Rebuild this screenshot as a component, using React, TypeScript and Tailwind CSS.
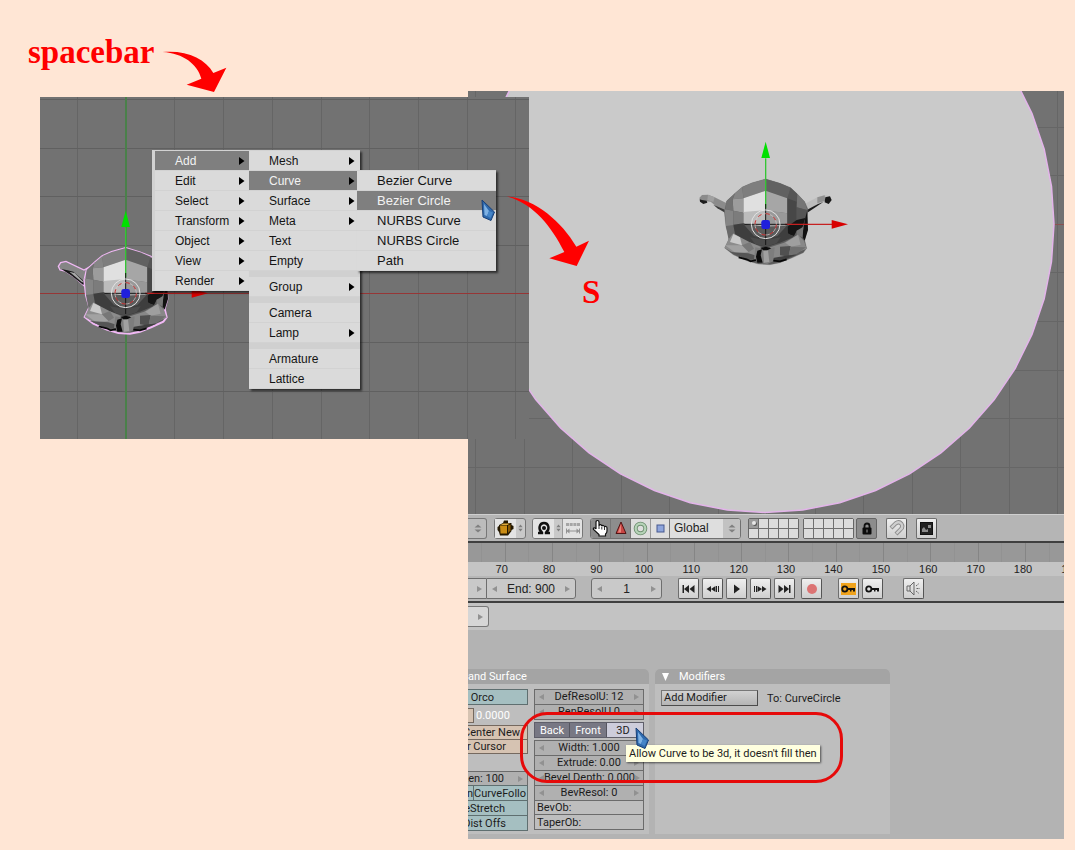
import React from "react";

type MenuEntry = { label: string; sub?: boolean; active?: boolean; gap?: boolean };

const addMenu: MenuEntry[] = [
  { label: "Add", sub: true, active: true },
  { label: "Edit", sub: true },
  { label: "Select", sub: true },
  { label: "Transform", sub: true },
  { label: "Object", sub: true },
  { label: "View", sub: true },
  { label: "Render", sub: true },
];

const typeMenu: MenuEntry[] = [
  { label: "Mesh", sub: true },
  { label: "Curve", sub: true, active: true },
  { label: "Surface", sub: true },
  { label: "Meta", sub: true },
  { label: "Text" },
  { label: "Empty" },
  { label: "Group", sub: true, gap: true },
  { label: "Camera", gap: true },
  { label: "Lamp", sub: true },
  { label: "Armature", gap: true },
  { label: "Lattice" },
];

const curveMenu: MenuEntry[] = [
  { label: "Bezier Curve" },
  { label: "Bezier Circle", active: true },
  { label: "NURBS Curve" },
  { label: "NURBS Circle" },
  { label: "Path" },
];

function Menu({ label, entries, className, item }: { label: string; entries: MenuEntry[]; className: string; item: string }) {
  return (
    <ul role="menu" aria-label={label} className={`absolute bg-[#dadada] shadow-[2px_2px_2px_rgba(0,0,0,0.6)] ${className}`}>
      {entries.map((e) => (
        <li key={e.label} role="none" className={e.gap ? "border-t-[6px] border-[#d0d0d0]" : ""}>
          <button
            role="menuitem"
            className={`flex h-5 w-full items-center justify-between border-b border-[#d2d2d2] text-left leading-5 ${item} ${
              e.active ? "bg-[#7f7f7f] text-[#f2f2f2]" : "text-[#141414]"
            }`}
          >
            {e.label}
            {e.sub && (
              <svg width="6" height="8" viewBox="0 0 6 8" className="shrink-0">
                <path d="M0 0 L5.5 4 L0 8Z" fill="#000" />
              </svg>
            )}
          </button>
        </li>
      ))}
    </ul>
  );
}

function Head({ selected }: { selected?: boolean }) {
  return (
    <g>
      {selected ? (
        <g>
          <path d="M55 202 L62 191 L78 187 L132 213 L155 200 L150 240 L134 262 L100 232 L75 216 L60 213Z" fill="#858585" stroke="#f0b8f4" strokeWidth="4" />
          <path d="M64 210 L82 214 L100 218 L134 248 L130 258 L95 230Z" fill="#161616" />
          <path d="M88 218 L104 222 L132 250 L126 250Z" fill="#a8a8a8" />
        </g>
      ) : (
        <g>
          <path d="M58 204 L66 195 L84 194 L104 202 L140 220 L138 246 L112 232 L92 215 L76 214 L64 216Z" fill="#8b8b8b" />
          <path d="M84 194 L104 202 L100 216 L82 210Z" fill="#a0a0a0" />
          <path d="M59 208 L66 210 L80 212 L82 218 L70 222 L60 215Z" fill="#1d1d1d" />
          <path d="M100 224 L136 240 L138 250 L112 235Z" fill="#3c3c3c" />
          <path d="M378 220 L412 202 L434 196 L450 199 L455 210 L446 222 L430 216 L412 223 L380 244Z" fill="#bdbdbd" />
          <path d="M412 202 L434 196 L436 212 L412 220Z" fill="#919191" />
          <path d="M436 202 L450 199 L455 210 L446 222 L434 217Z" fill="#181818" />
          <path d="M414 222 L430 216 L384 247 L380 240Z" fill="#1c1c1c" />
        </g>
      )}
      <path
        d="M257 147 L300 160 L332 173 L352 192 L374 215 L384 238 L380 262 L382 300 L374 330 L380 355 L370 368 L335 384 L300 398 L270 404 L235 402 L200 392 L160 374 L134 354 L148 325 L138 290 L133 245 L140 213 L165 190 L187 171 L215 159Z"
        fill="#5c5c5c"
        stroke={selected ? "#f0b8f4" : "#777"}
        strokeWidth={selected ? 6 : 1}
      />
      <path d="M257 147 L215 159 L187 171 L190 205 L257 182Z" fill="#7e7e7e" />
      <path d="M257 147 L300 160 L332 173 L322 205 L257 182Z" fill="#616161" />
      <path d="M257 182 L190 205 L190 248 L225 250 L257 252Z" fill="#e0e0e0" />
      <path d="M190 246 L257 240 L257 290 L190 282Z" fill="#bcbcbc" />
      <path d="M257 182 L322 205 L322 250 L257 242Z" fill="#a6a6a6" />
      <path d="M257 240 L322 250 L322 288 L257 290Z" fill="#999" />
      <path d="M187 171 L165 190 L158 208 L190 205Z" fill="#858585" />
      <path d="M158 208 L190 205 L190 248 L160 242Z" fill="#9c9c9c" />
      <path d="M165 190 L140 213 L136 238 L160 242 L158 208Z" fill="#727272" />
      <path d="M134 238 L160 242 L160 288 L138 288Z" fill="#858585" />
      <path d="M160 242 L190 248 L190 283 L160 288Z" fill="#7c7c7c" />
      <path d="M138 288 L160 285 L168 318 L146 330Z" fill="#696969" />
      <path d="M322 205 L332 173 L352 192 L354 212 L350 235Z" fill="#555" />
      <path d="M322 205 L350 215 L350 272 L322 290Z" fill="#474747" />
      <path d="M352 192 L374 215 L382 240 L350 232Z" fill="#757575" />
      <path d="M350 232 L380 240 L376 268 L350 272Z" fill="#555" />
      <path d="M322 290 L350 270 L376 264 L366 296 L350 302 L342 318 L322 312Z" fill="#161616" />
      <path d="M376 264 L382 240 L384 300 L374 332 L366 318Z" fill="#111" />
      <path d="M350 302 L370 290 L368 322 L350 316Z" fill="#777" />
      <path d="M160 284 L190 280 L257 304 L322 286 L324 310 L342 320 L300 338 L257 352 L210 338 L166 318Z" fill="#3e3e3e" />
      <path d="M190 282 L257 292 L320 288 L292 318 L257 326 L222 318Z" fill="#5b5b5b" />
      <path d="M210 322 L257 330 L302 322 L290 340 L257 350 L225 342Z" fill="#4b4b4b" />
      <path d="M160 310 L178 320 L208 336 L242 350 L236 388 L190 385 L134 354 L146 328Z" fill="#8c8c8c" />
      <path d="M160 312 L180 322 L186 346 L150 336Z" fill="#cacaca" />
      <path d="M136 346 L186 346 L205 366 L168 370Z" fill="#a2a2a2" />
      <path d="M186 346 L210 336 L222 356 L206 366Z" fill="#777" />
      <path d="M150 366 L205 370 L232 378 L230 388 L195 386Z" fill="#555" />
      <path d="M354 314 L372 332 L380 356 L330 376 L276 390 L270 352 L312 338Z" fill="#888" />
      <path d="M354 314 L362 344 L332 350 L316 338Z" fill="#9f9f9f" />
      <path d="M300 350 L332 348 L326 380 L300 376Z" fill="#505050" />
      <path d="M332 350 L378 352 L350 372 L326 376Z" fill="#707070" />
      <path d="M278 384 L326 376 L350 374 L304 392 L280 394Z" fill="#3f3f3f" />
      <path d="M226 352 L257 358 L284 352 L280 394 L262 402 L236 398 L222 386Z" fill="#7d7d7d" />
      <path d="M250 362 L264 360 L268 396 L252 398Z" fill="#a0a0a0" />
      <path d="M232 362 L246 358 L242 376 L248 398 L232 398 L228 380Z" fill="#0c0c0c" />
      <path d="M242 354 L257 350 L274 355 L262 361 L250 361Z" fill="#0c0c0c" />
      <path d="M176 382 L200 388 L212 394 L228 390 M280 392 L300 394 L320 388" stroke="#080808" strokeWidth="5" fill="none" />
      <path d="M257 85V235" stroke="#35c535" strokeWidth="4" />
      <path d="M257 35 L270 84 L244 84Z" fill="#00e000" />
      <path d="M315 283H456" stroke="#c52020" strokeWidth="4" />
      <path d="M504 283 L455 296 L455 270Z" fill="#d80000" />
      <path d="M257 222V345M193 283H322" stroke="#161616" strokeWidth="3" />
      <circle cx="257" cy="283" r="43" fill="none" stroke="#e2e2e2" strokeWidth="3" />
      <circle cx="257" cy="283" r="32" fill="none" stroke="#d23030" strokeWidth="3" strokeDasharray="12.5 12.500" />
      <circle cx="257" cy="283" r="32" fill="none" stroke="#ddcfcf" strokeWidth="2" strokeDasharray="12.500 12.500" strokeDashoffset="12.500" />
      <rect x="244" y="270" width="26" height="27" rx="7" fill="#1f1fdc" />
    </g>
  );
}

const range = (n: number) => Array.from({ length: n }, (_, i) => i);

const circlePoints = range(48)
  .map((i) => {
    const a = (i * Math.PI) / 24;
    return `${(297 + 289 * Math.cos(a)).toFixed(1)},${(133 + 288.5 * Math.sin(a)).toFixed(1)}`;
  })
  .join(" ");

function Pointer({ className }: { className: string }) {
  return (
    <svg className={`absolute ${className}`} width="15" height="23" viewBox="0 0 15 23">
      <path d="M1 1 L13.5 13 L10 21.5 L2 18Z" fill="#2e69ad" stroke="#173f78" strokeWidth="1" />
      <path d="M3 5 L8 12 L6 17 L3.5 16Z" fill="#7fb2e4" />
      <path d="M8 12 L12 13.5 L9.5 19 L6 17Z" fill="#4585c8" />
    </svg>
  );
}

function Updown({ small }: { small?: boolean }) {
  return (
    <svg width={small ? 5 : 8} height={small ? 8 : 9} viewBox="0 0 8 10" preserveAspectRatio="none" className="shrink-0">
      <path d="M0.5 4 L4 0.5 L7.5 4Z M0.5 6 L4 9.5 L7.5 6Z" fill="#808080" />
    </svg>
  );
}

function Tri({ left }: { left?: boolean }) {
  return (
    <svg width="5" height="6" viewBox="0 0 5 6" className="shrink-0">
      <path d={left ? "M5 0 L0 3 L5 6Z" : "M0 0 L5 3 L0 6Z"} fill="#919191" />
    </svg>
  );
}

const key =
  "flex h-[21px] w-[21px] shrink-0 items-center justify-center rounded-[2px] border border-[#6e6e6e] border-r-[#555] border-b-[#555] bg-gradient-to-b from-[#efefef] to-[#cfcfcf]";

function Transport({ label, d }: { label: string; d: string }) {
  return (
    <button aria-label={label} className={key}>
      <svg width="13" height="10" viewBox="0 0 13 10">
        <path d={d} fill="#222" />
      </svg>
    </button>
  );
}

function Layers({ dot }: { dot?: boolean }) {
  return (
    <div className="grid h-[21px] w-[51px] shrink-0 grid-cols-5 grid-rows-2 gap-px rounded-[2px] border border-[#666] bg-[#6f6f6f]">
      {range(10).map((i) => (
        <button key={i} aria-label={`Layer ${i + 1}`} className={dot && i === 0 ? "flex items-center justify-center bg-[#9b9b9b]" : "bg-[#dcdcdc]"}>
          {dot && i === 0 && <span className="h-1 w-1 rounded-full bg-[#e8e8e8] shadow-[1px_1px_0_#555]" />}
        </button>
      ))}
    </div>
  );
}

function NumRow({ text }: { text: string }) {
  return (
    <button className="-mt-px flex h-[16px] w-full items-center justify-between border border-[#6b6b6b] bg-[#b0b0b0] px-1 leading-[14px] whitespace-nowrap first:mt-0">
      <Tri left />
      <span>{text}</span>
      <Tri />
    </button>
  );
}

function KeyIcon() {
  return (
    <svg width="15" height="12" viewBox="0 0 15 12">
      <circle cx="3.8" cy="6" r="2.6" fill="none" stroke="#111" strokeWidth="1.8" />
      <path d="M6 5H14V8.5H12V7H10.500V8.500H9V7H6Z" fill="#111" />
    </svg>
  );
}

function Header() {
  return (
    <div className="flex h-[27px] items-center overflow-hidden border-t border-[#cfcfcf] bg-[#b5b5b5]">
      <button aria-label="Mode" className="mr-[7px] flex h-[21px] w-[19px] shrink-0 items-center justify-end rounded-r-[3px] border border-l-0 border-[#777] bg-[#bcbcbc] pr-1">
        <Updown />
      </button>
      <button aria-label="Draw type" className="mr-[6px] flex h-[21px] w-[32px] shrink-0 items-center justify-between rounded-[3px] border border-[#777] bg-[#c9c9c9] pr-[2px]">
        <span className="flex h-full w-[21px] items-center justify-center bg-[#e4e4e4]">
          <svg width="17" height="16" viewBox="0 0 17 16">
            <path d="M7 0.500 H11 V3 H14.500 V5 L16.500 6 V9 L14.500 10 V11 L11 15.500 H3 L2 12 L0.500 10 V7 L2 6 V5 L6 3Z" fill="#241800" />
            <path d="M3 5.500 H10 V13.500 H3.500Z" fill="#c98c14" />
            <path d="M3.500 5 L6.500 3.500 H13 L10.500 5Z" fill="#e0ac3c" />
            <path d="M11 5.500 L13.500 4.500 V10.500 L11 13Z" fill="#8d5d05" />
          </svg>
        </span>
        <Updown small />
      </button>
      <div className="mr-[7px] flex h-[21px] w-[51px] shrink-0 overflow-hidden rounded-[3px] border border-[#777] bg-[#c9c9c9]">
        <button aria-label="Pivot" className="flex w-[30px] items-center justify-between border-r border-[#999] pr-px">
          <span className="flex h-full w-[21px] items-center justify-center bg-[#e4e4e4]">
            <svg width="14" height="14" viewBox="0 0 14 14">
              <path d="M1 12H5V11.500C0.500 8 2.500 2 7 2S13.500 8 9 11.500V12H13" fill="none" stroke="#111" strokeWidth="2.400" />
              <circle cx="7" cy="7" r="2" fill="#111" />
            </svg>
          </span>
          <Updown small />
        </button>
        <button aria-label="Move centers only" className="flex flex-1 items-center justify-center bg-[#e2e2e2]">
          <svg width="14" height="12" viewBox="0 0 14 12">
            <path d="M0 1h3v3H0zM3.700 1h3v3h-3zM7.400 1h3v3h-3zM11 1h3v3h-3z" fill="#a5a5a5" />
            <path d="M0 6.500H1V8.500L3.500 6.500V8.500H10.500V6.500L13 8.500V6.500H14V11.500H13V9.500L10.500 11.500V9.500H3.500V11.500L1 9.500V11.500H0Z" fill="#929292" />
          </svg>
        </button>
      </div>
      <div className="mr-[7px] flex h-[21px] w-[151px] shrink-0 overflow-hidden rounded-[3px] border border-[#707070] bg-[#dedede]">
        <button aria-label="Manipulator" className="flex w-5 items-center justify-center border-r border-[#777] bg-[#8d8d8d]">
          <svg width="17" height="18" viewBox="0 0 17 18">
            <path
              d="M4 10V3.200Q4 1.500 5.500 1.500T7 3.200V7Q7.200 5.500 8.500 5.700T9.800 7.200Q10.200 6.200 11.300 6.500T12.500 8Q13 7.200 14 7.500T15 9V12Q15 14 13.500 15V17H7V15.500L1.500 10.500Q1 9 2.200 8.800T4 10Z"
              fill="#fff"
              stroke="#111"
              strokeWidth="1.200"
            />
            <path d="M7 7V10M9.800 8V10.500M12.500 8.500V11" stroke="#333" strokeWidth="1" />
          </svg>
        </button>
        <button aria-label="Translate" className="flex w-5 items-center justify-center border-r border-[#777] bg-[#8d8d8d]">
          <svg width="12" height="14" viewBox="0 0 12 14">
            <path d="M6 1 L11 12.500H1Z" fill="#c94644" stroke="#521515" strokeWidth="1" />
            <path d="M6 3V11.500H3Z" fill="#e8857c" />
          </svg>
        </button>
        <button aria-label="Rotate" className="flex w-5 items-center justify-center border-r border-[#999]">
          <svg width="15" height="15" viewBox="0 0 15 15">
            <circle cx="7.500" cy="7.500" r="4.800" fill="none" stroke="#6f8f72" strokeWidth="4" />
            <circle cx="7.500" cy="7.500" r="4.800" fill="none" stroke="#b6d4b8" strokeWidth="2.200" />
          </svg>
        </button>
        <button aria-label="Scale" className="flex w-[19px] items-center justify-center border-r border-[#777]">
          <svg width="9" height="9" viewBox="0 0 9 9">
            <rect x="1" y="1" width="7" height="7" fill="#8ea5dc" stroke="#46598f" />
          </svg>
        </button>
        <label className="relative flex flex-1 items-center">
          <select aria-label="Orientation" className="h-full w-full appearance-none bg-transparent pl-1 text-[12px] text-[#222]">
            <option>Global</option>
          </select>
          <span className="pointer-events-none absolute inset-y-0 right-0 flex w-[17px] items-center justify-center bg-[#c2c2c2]">
            <Updown />
          </span>
        </label>
      </div>
      <div className="mr-1 shrink-0">
        <Layers dot />
      </div>
      <div className="mr-[2px] shrink-0">
        <Layers />
      </div>
      <button aria-label="Lock layers" className="mr-[9px] flex h-[21px] w-[21px] shrink-0 items-center justify-center rounded-[2px] border border-[#666] bg-[#8d8d8d]">
        <svg width="10" height="13" viewBox="0 0 10 13">
          <path d="M2.500 6V4Q2.500 1.500 5 1.500T7.500 4V6" fill="none" stroke="#111" strokeWidth="1.800" />
          <rect x="0.500" y="5.500" width="9" height="7" rx="1" fill="#0c0c0c" />
          <rect x="4.500" y="7.500" width="1" height="3" fill="#999" />
        </svg>
      </button>
      <div className="flex shrink-0 gap-[9px]">
        <button aria-label="Snap" className={key}>
          <svg width="17" height="17" viewBox="0 0 17 17">
            <path d="M3 8 L7.500 3.500 Q11 1 13.300 3.700 Q15.500 7 12.500 9.500 L8 14" fill="none" stroke="#8a8a8a" strokeWidth="4.200" />
            <path d="M3.500 7.500 L7.500 3.500 Q11 1 13.300 3.700 Q15.500 7 12.500 9.500 L8.500 13.500" fill="none" stroke="#cfcfcf" strokeWidth="2.400" />
          </svg>
        </button>
        <button aria-label="Render view" className={key}>
          <svg width="13" height="13" viewBox="0 0 13 13">
            <rect x="0.500" y="0.500" width="12" height="12" fill="#222" stroke="#111" />
            <path d="M2 10V7L4 5L6 8L8 7V10ZM8 3H11V6H8Z" fill="#8c8c8c" />
          </svg>
        </button>
      </div>
    </div>
  );
}

function Timeline() {
  return (
    <section aria-label="Timeline" className="overflow-hidden border-t-2 border-[#3f3f3f] bg-[#b7b7b7]">
      <svg className="block h-[19px] w-full bg-[#989898]">
        {range(26).map((i) => (
          <path key={i} d={`M${Math.round(13 + 23.65 * i) + 0.5} 0V19`} stroke={i % 2 ? "#858585" : "#929292"} />
        ))}
      </svg>
      <div className="-mr-[30px] flex h-[14px] bg-[#c4c4c4] pl-[10px] text-center text-[11px] leading-[14px] text-[#222]">
        {range(13).map((i) => (
          <span key={i} className="min-w-0 flex-1">
            {70 + i * 10}
          </span>
        ))}
      </div>
      <div className="flex h-[25px] items-center text-[12px] text-[#222]">
        <button aria-label="Start" className="flex h-[21px] w-[18px] shrink-0 items-center justify-end border-y border-[#6e6e6e] bg-[#c9c9c9] pr-1">
          <Tri />
        </button>
        <button className="mr-[15px] flex h-[21px] w-[90px] shrink-0 items-center justify-between rounded-r-[3px] border border-[#6e6e6e] bg-[#c9c9c9] px-[5px]">
          <Tri left />
          <span>End: 900</span>
          <Tri />
        </button>
        <button className="mr-4 flex h-[21px] w-[71px] shrink-0 items-center justify-between rounded-[3px] border border-[#6e6e6e] bg-[#c9c9c9] px-[5px]">
          <Tri left />
          <span>1</span>
          <Tri />
        </button>
        <div className="mr-[6px] flex shrink-0 gap-[3px]">
          <Transport label="First frame" d="M0.500 1h1.500v8H0.500zM7 1V9L2 5ZM12.500 1V9L7.500 5Z" />
          <Transport label="Previous keyframe" d="M5 2V8L0.500 5ZM9.500 2V8L5 5ZM10 2h1v6h-1zM12 2h1v6h-1z" />
          <Transport label="Play" d="M4 0.500 L10 5 L4 9.500Z" />
          <Transport label="Next keyframe" d="M0 2h1v6H0zM2 2h1v6H2zM3.500 2V8L8 5ZM8 2V8L12.500 5Z" />
          <Transport label="Last frame" d="M0.500 1V9L5.500 5ZM6 1V9L11 5ZM11 1h1.500v8H11z" />
        </div>
        <button aria-label="Record" className={`mr-4 ${key}`}>
          <span className="h-[10px] w-[10px] rounded-full bg-[#dc7474]" />
        </button>
        <div className="mr-5 flex shrink-0 gap-[3px]">
          <button aria-label="Insert key" className={key}>
            <span className="flex h-3 w-[15px] bg-[#f0a31c]">
              <KeyIcon />
            </span>
          </button>
          <button aria-label="Delete key" className={key}>
            <KeyIcon />
          </button>
        </div>
        <button aria-label="Sound" className={key}>
          <svg width="15" height="15" viewBox="0 0 15 15" fill="none" stroke="#666">
            <path d="M1 5H4L8 1V14L4 10H1Z M4 5V10" />
            <path d="M10 5 L13 2.500M10.500 7.500H14M10 10L13 12.500" strokeDasharray="2 1" />
          </svg>
        </button>
      </div>
    </section>
  );
}

const teal = "-mt-px flex h-[16px] items-center justify-end border border-l-0 border-[#5f6f70] bg-[#a5bfc1]";
const sand = "-mt-px flex h-[15px] items-center justify-end border border-l-0 border-[#75695f] bg-[#d6c3b2]";

function CurvePanel() {
  return (
    <section aria-label="Curve and Surface" className="h-[165px] w-[181px] shrink-0 overflow-hidden rounded-tr-[5px] bg-[#bebebe]">
      <h2 className="h-[15px] bg-[#a4a4a4] leading-[15px] text-white">and Surface</h2>
      <div className="flex gap-[6px] pt-[5px]">
        <div className="flex w-[60px] flex-col pt-px whitespace-nowrap">
          <button className={`${teal} pr-[33px]`}>Orco</button>
          <div className="flex h-[19px] items-end pb-px text-white">
            <span className="mr-[2px] h-[15px] w-[6px] border border-l-0 border-[#75695f] bg-[#d6c3b2]" />
            <span className="leading-[14px]">0.0000</span>
          </div>
          <button className={`mt-px ${sand} pr-[7px]`}>Center New</button>
          <button className={`${sand} pr-[21px]`}>r Cursor</button>
          <button className="mt-[17px] flex h-[15px] items-center justify-end gap-[14px] border border-l-0 border-[#6b6b6b] bg-[#b0b0b0] pr-1">
            Len: 100
            <Tri />
          </button>
          <div className="flex">
            <button className={`${teal} w-[6px]`}>n</button>
            <button className={`${teal} flex-1 pr-px`}>CurveFollo</button>
          </div>
          <button className={`${teal} pr-[22px]`}>eStretch</button>
          <button className={`${teal} pr-[21px]`}>Dist Offs</button>
        </div>
        <div className="w-[110px]">
          <div>
            <NumRow text="DefResolU: 12" />
            <NumRow text="RenResolU 0" />
          </div>
          <div className="mt-[2px] flex h-[16px] border border-[#5f5f6a] text-white">
            <button className="w-[35px] border-r border-[#55555f] bg-[#787884]">Back</button>
            <button className="w-[37px] border-r border-[#55555f] bg-[#787884]">Front</button>
            <button className="flex-1 bg-[#cdcddb] pr-1 text-[#222]">3D</button>
          </div>
          <div className="mt-[2px]">
            <NumRow text="Width: 1.000" />
            <NumRow text="Extrude: 0.00" />
            <NumRow text="Bevel Depth: 0.000" />
            <NumRow text="BevResol: 0" />
            <button className="-mt-px flex h-[15px] w-full items-center border border-[#6b6b6b] pl-[2px]">BevOb:</button>
            <button className="-mt-px flex h-[16px] w-full items-center border border-[#6b6b6b] pl-[2px]">TaperOb:</button>
          </div>
        </div>
      </div>
    </section>
  );
}

function ModifiersPanel() {
  return (
    <section aria-label="Modifiers" className="h-[165px] w-[235px] shrink-0 rounded-t-[5px] bg-[#bebebe]">
      <h2 className="flex h-[15px] items-center gap-[10px] rounded-t-[5px] bg-[#a4a4a4] pl-[7px] leading-[15px] text-white">
        <svg width="7" height="8" viewBox="0 0 7 8">
          <path d="M0 0H7L3.500 8Z" fill="#fff" />
        </svg>
        Modifiers
      </h2>
      <div className="flex items-center gap-[9px] pt-[6px] pl-[6px]">
        <button className="h-[16px] w-[97px] border border-[#777] border-r-[#4c4c4c] border-b-[#4c4c4c] bg-gradient-to-b from-[#d2d2d2] to-[#b5b5b5] pl-[2px] text-left leading-[14px]">
          Add Modifier
        </button>
        <span>To: CurveCircle</span>
      </div>
    </section>
  );
}

function MainWindow() {
  return (
    <section className="relative mr-[11px] ml-[468px] overflow-hidden bg-[#b3b3b3]">
      <svg className="block h-[423px] w-full bg-[#727272]">
        {range(20).map((i) => (
          <path key={`v${i}`} d={`M${Math.round(7 + 48.5 * i) + 0.5} 0V423`} stroke="#666" />
        ))}
        {range(9).map((i) => (
          <path key={`h${i}`} d={`M0 ${Math.round(35.500 + 48.6 * i) + 0.5}H1200`} stroke={i === 2 ? "#8a5252" : "#666"} />
        ))}
        <polygon points={circlePoints} fill="#cacaca" stroke="#e3b4ea" strokeWidth="1.500" />
        <g transform="translate(212 39) scale(0.33333)">
          <Head />
        </g>
      </svg>
      <Header />
      <Timeline />
      <div className="flex h-[29px] items-center border-t-2 border-[#3f3f3f] bg-[#c3c3c3]">
        <button aria-label="Frame" className="flex h-[21px] w-[21px] items-center justify-end rounded-r-[3px] border border-l-0 border-[#777] bg-[#d6d6d6] pr-[5px]">
          <Tri />
        </button>
      </div>
      <div className="flex h-[209px] gap-[6px] pt-[39px] font-['Roboto',sans-serif] text-[11px] leading-[13px] text-[#1c1c1c]">
        <CurvePanel />
        <ModifiersPanel />
      </div>
      <div className="absolute top-[621px] left-[52px] h-[71px] w-[323px] rounded-[27px] border-[3px] border-[#e60a0a]" />
      <div role="tooltip" className="absolute top-[654px] left-[158px] h-[17px] bg-[#ffffdf] px-[3px] font-['Roboto',sans-serif] text-[11px] leading-[17px] whitespace-nowrap text-[#1c1c1c] shadow-[1px_1px_2px_rgba(0,0,0,0.6)]">
        Allow Curve to be 3d, it doesn't fill then
      </div>
      <Pointer className="top-[636px] left-[167px]" />
    </section>
  );
}

function MenuWindow() {
  return (
    <section className="absolute top-[97px] left-[40px] h-[342px] w-[489px] bg-[#727272]">
      <svg className="block h-full w-full">
        {range(10).map((i) => (
          <path key={`v${i}`} d={`M${Math.round(37 + 48.7 * i) + 0.5} 0V342`} stroke="#656565" />
        ))}
        {range(7).map((i) => (
          <path key={`h${i}`} d={`M0 ${Math.round(2 + 48.6 * i) + 0.5}H489`} stroke="#606060" />
        ))}
        <rect x="0" y="196" width="489" height="1" fill="#963636" />
        <rect x="85" y="0" width="2" height="342" fill="#4a804a" />
        <g transform="translate(0 102) scale(0.33333)">
          <Head selected />
        </g>
      </svg>
      <Menu label="Toolbox" entries={addMenu} className="top-[53px] left-[112px] w-[97px] border-t border-l-[3px] border-[#d2d2d2] text-[12px]" item="pl-5 pr-1" />
      <Menu label="Add" entries={typeMenu} className="top-[53px] left-[209px] w-[111px] border-t border-[#d2d2d2] text-[12px]" item="pl-5 pr-[5px]" />
      <Menu label="Curve" entries={curveMenu} className="top-[73px] left-[317px] w-[139px] border-t border-[#d2d2d2] text-[13px]" item="pl-5 pr-1" />
      <Pointer className="top-[102px] left-[441px]" />
    </section>
  );
}

export default function App() {
  return (
    <main className="relative min-h-screen overflow-x-hidden bg-[#ffe6d5] font-['Liberation_Sans',Arial,sans-serif]">
      <header className="h-[91px] pt-[33px] pl-[28px]">
        <p className="font-['Liberation_Serif',serif] text-[33px] leading-[38px] font-bold text-[#f00]">spacebar</p>
      </header>
      <MainWindow />
      <MenuWindow />
      <svg className="absolute top-[48px] left-[160px]" width="70" height="48" viewBox="480 84 210 144">
        <path d="M488 96 C560 90 615 115 640 159 L679 143 L642 216 L560 194 L604 176 C592 132 550 100 488 96Z" fill="#f00" />
      </svg>
      <svg className="absolute top-[192px] left-[505px]" width="88" height="78" viewBox="495 126 264 234">
        <path d="M500 139 C585 145 665 215 709 290 L747 272 L710 348 L628 325 L673 306 C635 230 580 160 500 139Z" fill="#f00" />
      </svg>
      <p className="absolute top-[273px] left-[582px] font-['Liberation_Serif',serif] text-[33px] leading-[38px] font-bold text-[#f00]">S</p>
    </main>
  );
}
